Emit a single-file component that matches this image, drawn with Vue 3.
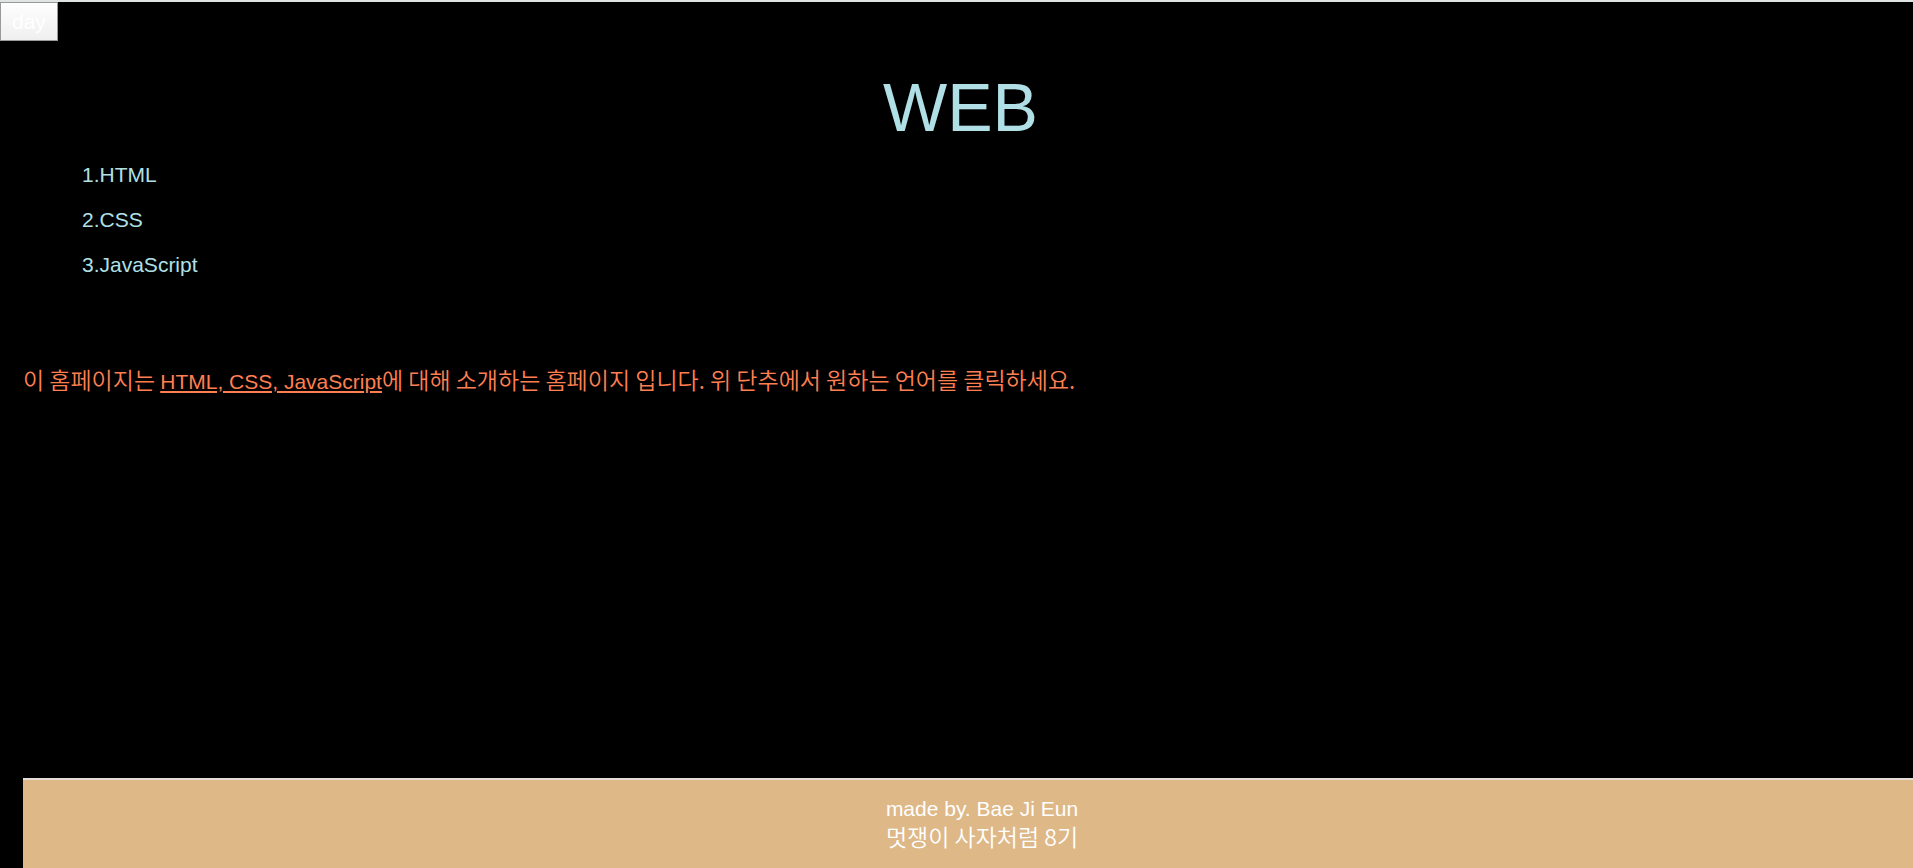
<script setup>
import { ref } from 'vue'

const label = ref('day')
const topics = ['HTML', 'CSS', 'JavaScript']
</script>

<template>
  <div class="page">
    <header>
      <button type="button" class="toggle">{{ label }}</button>
      <h1>WEB</h1>
    </header>
    <nav>
      <ul>
        <li v-for="(topic, i) in topics" :key="topic">
          <a href="#">{{ i + 1 }}.{{ topic }}</a>
        </li>
      </ul>
    </nav>
    <main>
      <p class="korean">이 홈페이지는 <u>HTML, CSS, JavaScript</u>에 대해 소개하는 홈페이지 입니다. 위 단추에서 원하는 언어를 클릭하세요.</p>
    </main>
    <footer>
      <p>made by. Bae Ji Eun</p>
      <p class="korean">멋쟁이 사자처럼 8기</p>
    </footer>
  </div>
</template>

<style>
body {
  margin: 0;
  background: #000;
}
</style>

<style scoped>
.page {
  box-sizing: border-box;
  display: flex;
  flex-direction: column;
  min-height: 100vh;
  border-top: 2px solid #e0e4e4;
  background: #000;
  color: #b0e0e6;
  font-family: "Liberation Sans", Arial, "Noto Sans CJK KR", sans-serif;
  font-size: 21px;
  line-height: 29px;
}

.toggle {
  display: block;
  height: 39px;
  padding: 0 11px;
  border: 1px solid #999;
  border-radius: 0;
  background: linear-gradient(#fefefe, #efefef);
  color: #fff;
  font: inherit;
}

h1 {
  margin: 26px 0 0;
  padding-left: 8px;
  font-size: 68px;
  font-weight: 400;
  line-height: 80px;
  text-align: center;
}

ul {
  display: flex;
  flex-direction: column;
  gap: 16px;
  margin: 13px 0 0;
  padding: 0 0 0 82px;
  list-style: none;
}

a {
  color: inherit;
  text-decoration: none;
}

main {
  flex: 1;
  padding: 87px 23px 0;
  color: #ff7f50;
}

p {
  margin: 0;
}

.korean {
  font-family: "Noto Sans CJK KR", sans-serif;
  font-size: 23px;
  font-weight: 350;
  line-height: 27px;
}

u {
  font-family: "Liberation Sans", Arial, sans-serif;
  font-size: 21px;
  font-weight: 400;
  text-decoration-thickness: 2px;
  text-underline-offset: 2px;
}

footer {
  margin-left: 23px;
  padding: 14px 0 18px 28px;
  border-top: 2px solid #e4ddd6;
  background: #deb887;
  color: #fff;
  text-align: center;
}
</style>
